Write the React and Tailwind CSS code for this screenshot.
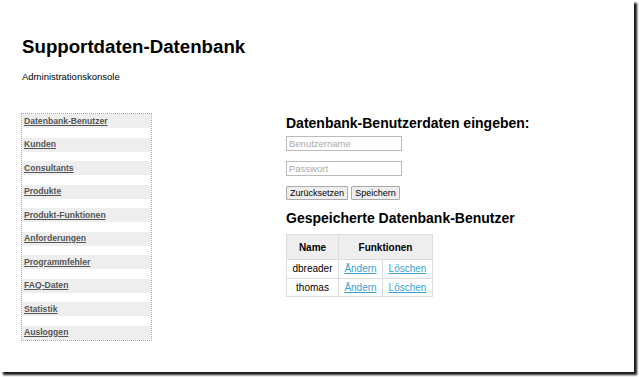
import React from 'react'

const navItems = [
  'Datenbank-Benutzer',
  'Kunden',
  'Consultants',
  'Produkte',
  'Produkt-Funktionen',
  'Anforderungen',
  'Programmfehler',
  'FAQ-Daten',
  'Statistik',
  'Ausloggen',
]

const users = ['dbreader', 'thomas']

export default function App() {
  return (
    <div className="h-[377px] w-[639px] bg-white font-['Liberation_Sans',Arial,sans-serif] text-black">
      <div className="h-[372px] w-[634px] bg-white pl-[21px] pt-[36px] shadow-[3px_3px_2px_rgba(0,0,0,0.9)]">
        <h1 className="pl-px text-[18.7px] font-bold leading-[22px]">Supportdaten-Datenbank</h1>
        <p className="mt-[13px] pl-px text-[9.5px] leading-[12px]">Administrationskonsole</p>

        <div className="mt-[30px] flex">
          {/* navigation */}
          <nav className="flex w-[131px] flex-col gap-[9.5px] border border-dotted border-[#aaa]">
            {navItems.map((item) => (
              <a
                key={item}
                href="#"
                className="flex h-[14px] items-center bg-[#eee] pl-[2px] text-[8.6px] font-bold text-[#555] underline"
              >
                {item}
              </a>
            ))}
          </nav>

          {/* content */}
          <div className="ml-[134px] pt-[2px]">
            <h2 className="text-[14px] font-bold leading-[16px]">Datenbank-Benutzerdaten eingeben:</h2>
            <div className="mt-[5px] flex flex-col gap-[10px]">
              <input
                placeholder="Benutzername"
                className="h-[15px] w-[116px] border border-[#bbb] bg-white px-[2px] text-[9.5px] outline-none placeholder:text-[#aaa]"
              />
              <input
                placeholder="Passwort"
                className="h-[15px] w-[116px] border border-[#bbb] bg-white px-[2px] text-[9.5px] outline-none placeholder:text-[#aaa]"
              />
              <div className="flex gap-[3px]">
                <button className="h-[14px] w-[62px] rounded-[1px] border border-[#aaa] bg-[#eee] text-[9px] leading-none">
                  Zurücksetzen
                </button>
                <button className="h-[14px] w-[49px] rounded-[1px] border border-[#aaa] bg-[#eee] text-[9px] leading-none">
                  Speichern
                </button>
              </div>
            </div>

            <h2 className="mt-[10px] text-[14px] font-bold leading-[16px]">Gespeicherte Datenbank-Benutzer</h2>
            <table className="mt-[8px] border-collapse text-[10px]">
              <thead>
                <tr className="h-[25px] bg-[#eee]">
                  <th className="w-[52px] border border-[#ddd] font-bold">Name</th>
                  <th colSpan={2} className="border border-[#ddd] font-bold">Funktionen</th>
                </tr>
              </thead>
              <tbody>
                {users.map((u) => (
                  <tr key={u} className="h-[18.5px]">
                    <td className="border border-[#ddd] text-center">{u}</td>
                    <td className="w-[44px] border border-[#ddd] text-center">
                      <a href="#" className="text-[#3a9fd5] underline">Ändern</a>
                    </td>
                    <td className="w-[50px] border border-[#ddd] text-center">
                      <a href="#" className="text-[#3a9fd5] underline">Löschen</a>
                    </td>
                  </tr>
                ))}
              </tbody>
            </table>
          </div>
        </div>
      </div>
    </div>
  )
}
